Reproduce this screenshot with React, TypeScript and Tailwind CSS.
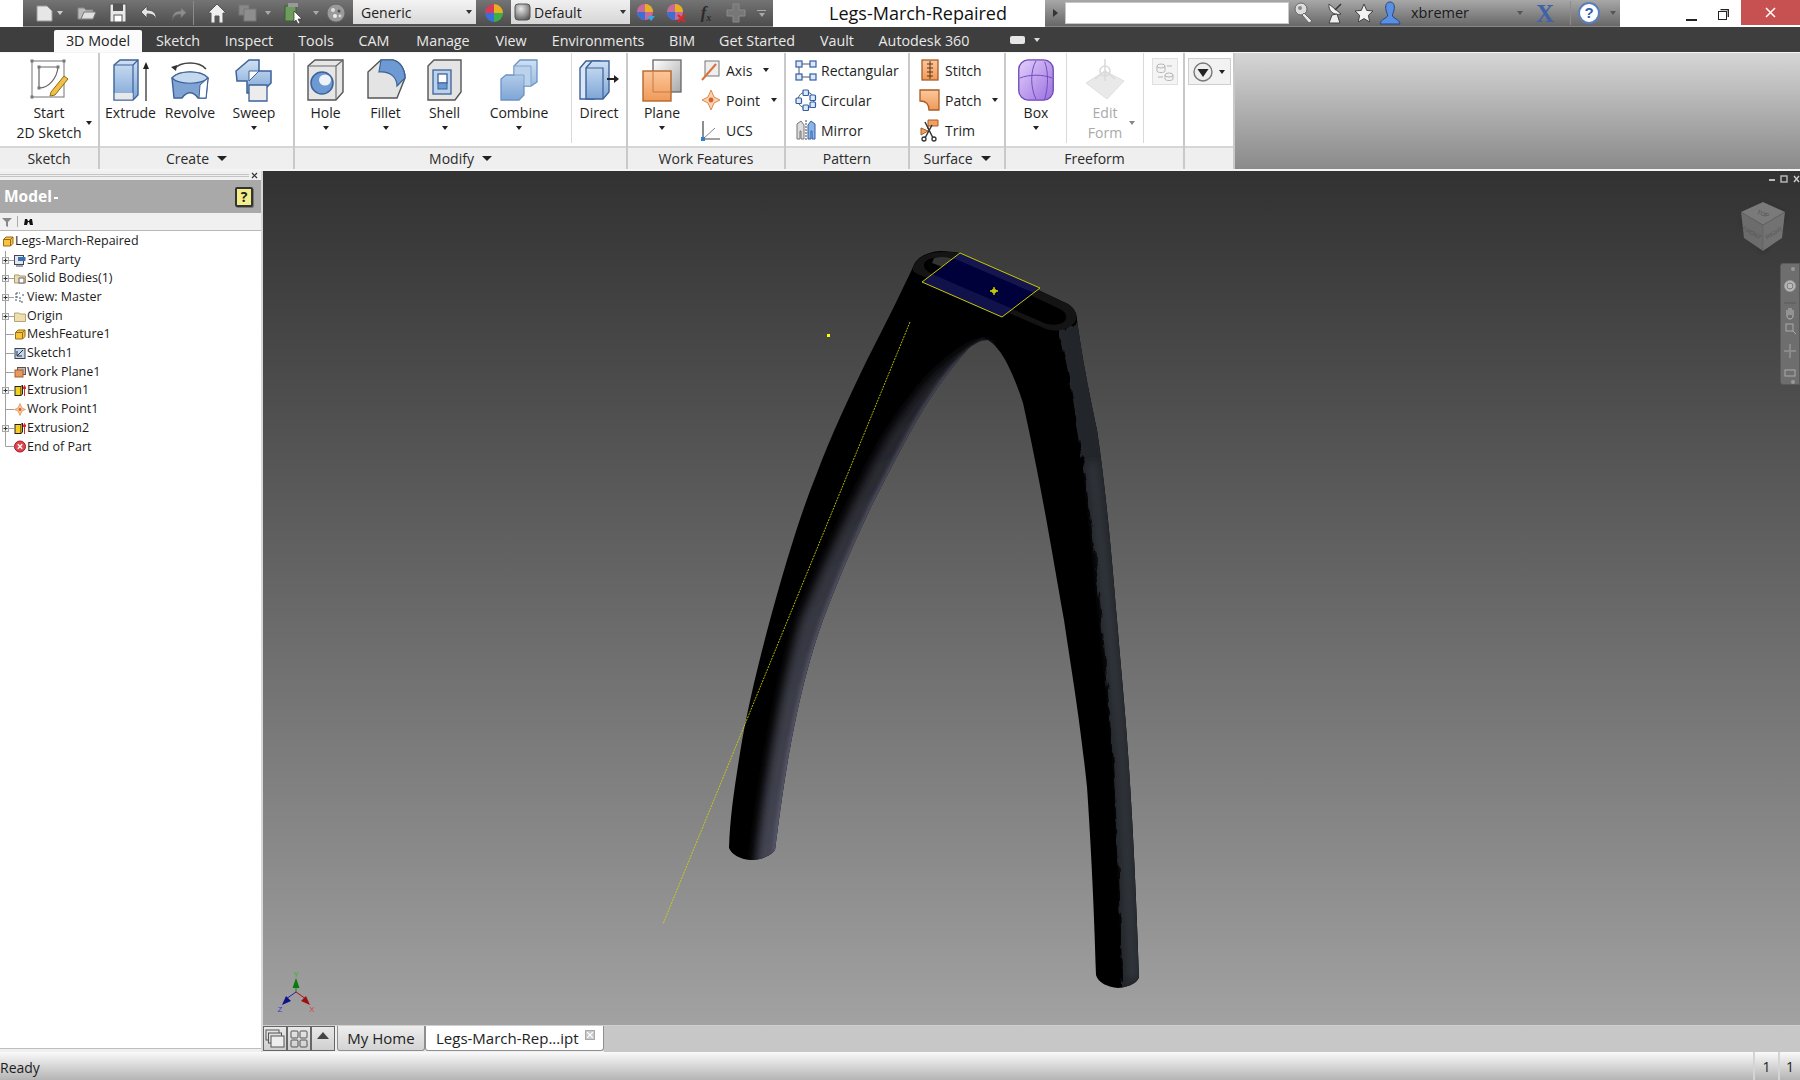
import React from 'react'

const UI = "font-['Open_Sans',sans-serif]"

function Caret({ className = 'border-t-[#222]', big }: { className?: string; big?: boolean }) {
  const size = big ? 'border-l-[5px] border-r-[5px] border-t-[5px]' : 'border-l-[3.5px] border-r-[3.5px] border-t-[4px]'
  return <span className={`inline-block w-0 h-0 border-l-transparent border-r-transparent ${size} ${className}`} />
}

function Slot({ className, children }: { className: string; children?: React.ReactNode }) {
  return <div className={`flex items-center justify-center shrink-0 h-full ${className}`}>{children}</div>
}

function Defs() {
  return (
    <svg className="absolute w-0 h-0">
      <defs>
        <linearGradient id="bl" x1="0" y1="0" x2="0" y2="1">
          <stop offset="0" stopColor="#cfe0f3" />
          <stop offset="1" stopColor="#7fa6d6" />
        </linearGradient>
        <linearGradient id="or" x1="0" y1="0" x2="0" y2="1">
          <stop offset="0" stopColor="#fbc79a" />
          <stop offset="1" stopColor="#f09a5a" />
        </linearGradient>
        <linearGradient id="pu" x1="0" y1="0" x2="1" y2="1">
          <stop offset="0" stopColor="#e3d0fb" />
          <stop offset="1" stopColor="#9a6fe0" />
        </linearGradient>
        <linearGradient id="gr" x1="0" y1="0" x2="1" y2="1">
          <stop offset="0" stopColor="#ffffff" />
          <stop offset="1" stopColor="#a8a8a8" />
        </linearGradient>
        <radialGradient id="sphere" cx=".4" cy=".3" r=".8">
          <stop offset="0" stopColor="#e8e8e8" />
          <stop offset="1" stopColor="#555" />
        </radialGradient>
      </defs>
    </svg>
  )
}

/* ---------- ribbon icons ---------- */
const S = '#3d6299'

const IconSketch = () => (
  <svg width="40" height="44" viewBox="0 0 40 44" fill="none">
    <rect x="3" y="3" width="32" height="36" stroke="#8a8a8a" strokeWidth="1.2" />
    <path d="M10 9 H29 M10 9 V30 M10 30 C20 30 28 20 29 9" stroke="#666" strokeWidth="1.2" />
    {[[3, 3], [35, 3], [3, 39], [10, 9], [29, 9], [10, 30]].map(([x, y], i) => (
      <rect key={i} x={x - 1.5} y={y - 1.5} width="3" height="3" fill="#777" />
    ))}
    <path d="M22 34 L35 18 L39 21 L26 37 L21 38 Z" fill="#f2c044" stroke="#8c6a1c" strokeWidth="1" />
  </svg>
)
const IconExtrude = () => (
  <svg width="44" height="46" viewBox="0 0 44 46" fill="none">
    <path d="M5 8 L11 3 H29 V38 L24 43 H5 Z" fill="url(#bl)" stroke={S} strokeWidth="1.4" />
    <path d="M5 8 H24 V43 M24 8 L29 3" stroke={S} strokeWidth="1.2" />
    <rect x="5.7" y="36" width="18" height="6.5" fill="#e8e8e8" />
    <path d="M37 44 V10" stroke="#333" strokeWidth="1.3" />
    <path d="M37 5 L40 12 H34 Z" fill="#222" />
  </svg>
)
const IconRevolve = () => (
  <svg width="42" height="44" viewBox="0 0 42 44" fill="none">
    <path d="M5 11 C12 3 30 3 37 11" stroke="#444" strokeWidth="1.6" />
    <path d="M2 9 L8 7 L7 13 Z" fill="#333" />
    <path d="M3 20 C10 12 32 12 39 20 L37 40 H29 C24 33 18 33 13 40 H5 Z" fill="#7fa4d4" stroke={S} strokeWidth="1.4" />
    <path d="M3 20 C10 27 32 27 39 20 C32 12 10 12 3 20 Z" fill="#c4d8ee" stroke={S} strokeWidth="1.2" />
    <path d="M31 27 L39 20 L37 40 H30 Z" fill="#fff" stroke={S} strokeWidth="1" />
  </svg>
)
const IconSweep = () => (
  <svg width="42" height="46" viewBox="0 0 42 46" fill="none">
    <path d="M3 14 L16 3 H26 V14 H38 V26 L28 36 H14 V24 H4 Z" fill="url(#bl)" stroke={S} strokeWidth="1.5" />
    <path d="M16 14 H26 L16 24 Z" fill="#fff" stroke={S} strokeWidth="1" />
    <path d="M16 28 H34 V44 H16 Z" fill="#ececec" stroke={S} strokeWidth="1.3" />
  </svg>
)
const IconHole = () => (
  <svg width="42" height="44" viewBox="0 0 42 44" fill="none">
    <path d="M3 8 L10 2 H38 V34 L31 42 H3 Z" fill="#e6e6e6" stroke="#555" strokeWidth="1.4" />
    <path d="M3 8 H31 V42 M31 8 L38 2" stroke="#666" strokeWidth="1.1" />
    <circle cx="17" cy="25" r="11" fill="#6d9ad3" stroke={S} strokeWidth="1.5" />
    <ellipse cx="20" cy="22" rx="6" ry="5.5" fill="#eef3fa" />
  </svg>
)
const IconFillet = () => (
  <svg width="42" height="44" viewBox="0 0 42 44" fill="none">
    <path d="M3 14 L16 2 H28 C36 4 40 12 40 20 L32 40 H3 Z" fill="#e4e4e4" stroke="#555" strokeWidth="1.4" />
    <path d="M16 2 H28 C36 4 40 12 40 20 L32 28 C32 20 26 13 14 14 Z" fill="#6d9ad3" stroke={S} strokeWidth="1.2" />
  </svg>
)
const IconShell = () => (
  <svg width="40" height="44" viewBox="0 0 40 44" fill="none">
    <path d="M3 8 L9 2 H36 V34 L30 42 H3 Z" fill="#e4e4e4" stroke="#555" strokeWidth="1.4" />
    <rect x="8" y="12" width="18" height="24" fill="#bcd2eb" stroke={S} strokeWidth="1.3" />
    <rect x="13" y="16" width="9" height="9" fill="#fff" stroke={S} strokeWidth="1.3" />
    <rect x="13" y="25" width="9" height="6" fill="#6d9ad3" stroke={S} strokeWidth="1" />
  </svg>
)
const IconCombine = () => (
  <svg width="40" height="44" viewBox="0 0 40 44" fill="none">
    <path d="M15 8 L21 2 H38 V24 L32 28 H25 V37 L20 42 H2 V21 L7 17 H15 Z" fill="url(#bl)" stroke="#6a92c6" strokeWidth="1.3" />
    <path d="M15 17 V8 H32 V28 H25 V17 Z" fill="#bcd2ea" stroke="#7fa4d0" strokeWidth="1" />
  </svg>
)
const IconDirect = () => (
  <svg width="42" height="44" viewBox="0 0 42 44" fill="none">
    <path d="M2 10 L8 3 H22 V34 L16 41 H2 Z" fill="#d9e6f5" stroke={S} strokeWidth="1.4" />
    <path d="M8 10 L14 3 H31 V34 L25 41 H8 Z" fill="url(#bl)" stroke={S} strokeWidth="1.4" />
    <path d="M8 10 H25 V41" stroke={S} strokeWidth="1.2" />
    <path d="M29 21 H38" stroke="#222" strokeWidth="2" />
    <path d="M36 17 L41 21 L36 25 Z" fill="#222" />
  </svg>
)
const IconPlane = () => (
  <svg width="42" height="44" viewBox="0 0 42 44" fill="none">
    <rect x="12" y="2" width="28" height="32" fill="url(#gr)" stroke="#666" strokeWidth="1.3" />
    <rect x="2" y="13" width="28" height="30" fill="url(#or)" stroke="#b5662b" strokeWidth="1.4" />
    <path d="M12 13 V34 H30" stroke="#c67a3e" strokeWidth="1" />
  </svg>
)
const IconBox = () => (
  <svg width="42" height="46" viewBox="0 0 42 48" fill="none">
    <rect x="3" y="3" width="36" height="42" rx="10" fill="url(#pu)" stroke="#6f4bb8" strokeWidth="1.4" />
    <path d="M4 22 C14 18 28 18 38 22 M21 4 C15 14 15 32 21 44 M30 5 C34 14 34 32 30 44" stroke="#6f4bb8" strokeWidth="1" />
  </svg>
)
const IconEditForm = () => (
  <svg width="44" height="46" viewBox="0 0 44 46" fill="none" opacity=".55">
    <path d="M3 26 L22 14 L41 24 L24 42 Z" fill="#d8d8d8" stroke="#c4c4c4" />
    <circle cx="22" cy="14" r="5" fill="none" stroke="#bdbdbd" strokeWidth="1.6" />
    <path d="M22 2 V24 M22 14 L12 22 M22 14 L32 22" stroke="#bdbdbd" strokeWidth="1.6" />
  </svg>
)

const IconAxis = () => (
  <svg width="20" height="22" viewBox="0 0 20 22" fill="none">
    <rect x="4" y="2" width="14" height="15" fill="#eee" stroke="#777" />
    <path d="M1 21 L15 5" stroke="#d8743a" strokeWidth="2" />
  </svg>
)
const IconPoint = () => (
  <svg width="20" height="22" viewBox="0 0 20 22" fill="none">
    <path d="M10 1 L13 8 L19 11 L13 14 L10 21 L7 14 L1 11 L7 8 Z" fill="#f6d3b0" stroke="#df8a4a" />
    <circle cx="10" cy="11" r="2.4" fill="#d8612b" />
  </svg>
)
const IconUCS = () => (
  <svg width="22" height="22" viewBox="0 0 22 22" fill="none">
    <path d="M3 2 V20 H20" stroke="#444" strokeWidth="1.2" />
    <path d="M3 20 L15 9" stroke="#888" />
    <rect x="1" y="18" width="4" height="4" fill="#2f7fd8" />
  </svg>
)
const IconRect = () => (
  <svg width="22" height="22" viewBox="0 0 22 22" fill="none">
    <path d="M4 5 H18 M4 5 V18 M4 18 H18" stroke="#555" />
    {[[1, 2], [15, 2], [1, 15], [15, 15]].map(([x, y], i) => (
      <rect key={i} x={x} y={y} width="6" height="6" fill="#dfe9f6" stroke="#2f5ea8" strokeWidth="1.2" />
    ))}
  </svg>
)
const IconCircular = () => (
  <svg width="22" height="22" viewBox="0 0 22 22" fill="none">
    <circle cx="11" cy="11" r="8" stroke="#666" />
    {[[8, 1], [15, 6], [15, 13], [8, 16], [1, 9]].map(([x, y], i) => (
      <rect key={i} x={x} y={y} width="5.5" height="5.5" rx="1" fill="#dfe9f6" stroke="#2f5ea8" strokeWidth="1.2" />
    ))}
  </svg>
)
const IconMirror = () => (
  <svg width="22" height="22" viewBox="0 0 22 22" fill="none">
    <path d="M2 20 V5 L6 2 L9 6 V20 H6 V12 H5 V20 Z" fill="#ddd" stroke="#777" />
    <path d="M20 20 V5 L16 2 L13 6 V20 H16 V12 H17 V20 Z" fill="#8db3e2" stroke="#2f5ea8" />
    <path d="M11 1 V21" stroke="#444" strokeDasharray="2 1" />
  </svg>
)
const IconStitch = () => (
  <svg width="20" height="22" viewBox="0 0 20 22" fill="none">
    <rect x="2" y="1" width="16" height="20" fill="url(#or)" stroke="#a85c28" strokeWidth="1.3" />
    <path d="M10 2 V20 M7 5 H13 M7 9 H13 M7 13 H13 M7 17 H13" stroke="#5a3414" />
  </svg>
)
const IconPatch = () => (
  <svg width="22" height="22" viewBox="0 0 22 22" fill="none">
    <path d="M1 1 H20 V21 H10 C10 15 7 12 1 12 Z" fill="url(#or)" stroke="#a85c28" strokeWidth="1.3" />
  </svg>
)
const IconTrim = () => (
  <svg width="22" height="24" viewBox="0 0 22 24" fill="none">
    <path d="M9 2 V11 M9 2 H19 V8 H9" fill="#f0a060" stroke="#a85c28" />
    <path d="M2 10 L9 13 L2 17 Z" fill="#f0a060" stroke="#a85c28" />
    <path d="M6 4 L14 20 M13 7 L6 20" stroke="#333" strokeWidth="1.5" />
    <circle cx="15" cy="21" r="2" stroke="#333" strokeWidth="1.3" />
    <circle cx="5" cy="21" r="2" stroke="#333" strokeWidth="1.3" />
  </svg>
)

function Large({ className, icon, lines, caret, muted }: { className: string; icon: React.ReactNode; lines: string[]; caret?: boolean; muted?: boolean }) {
  return (
    <div className={`flex flex-col items-center shrink-0 h-full pt-[5px] text-[14px] leading-[20px] ${muted ? 'text-[#a9a9a9]' : 'text-[#1e1e1e]'} ${className}`}>
      <div className="h-[44px] flex items-center justify-center">{icon}</div>
      <div className="mt-[1px] text-center whitespace-nowrap">
        {lines.map((l) => (
          <div key={l}>{l}</div>
        ))}
      </div>
      {caret && (
        <div className="h-[10px] flex items-center">
          <Caret />
        </div>
      )}
    </div>
  )
}

function SmallRow({ icon, label, caret, className }: { icon: React.ReactNode; label: string; caret?: boolean; className?: string }) {
  return (
    <div className={`h-[30px] flex items-center text-[14px] text-[#1e1e1e] whitespace-nowrap ${className ?? ''}`}>
      <div className="w-[24px] flex justify-center shrink-0">{icon}</div>
      <span className="ml-[3px]">{label}</span>
      {caret && (
        <span className="ml-[11px] flex items-center">
          <Caret />
        </span>
      )}
    </div>
  )
}

function Panel({ className, label, caret, children }: { className: string; label?: string; caret?: boolean; children: React.ReactNode }) {
  return (
    <div className={`flex flex-col shrink-0 border-r-2 border-[#c9c9c9] ${className}`}>
      <div className="h-[93px] flex">{children}</div>
      <div className="h-[23px] bg-[#efefef] border-t-2 border-[#d6d6d6] flex items-center justify-center gap-[8px] text-[14px] text-[#2a2a2a]">
        {label}
        {caret && <Caret big />}
      </div>
    </div>
  )
}

const VLine = () => <div className="w-[1px] h-[90px] bg-[#d9d9d9] shrink-0" />

/* ---------- quick access toolbar ---------- */
function TitleBar() {
  return (
    <div className="h-[27px] flex shrink-0 bg-white">
      <div className="w-[23px] shrink-0 bg-white" />
      <div className="w-[750px] shrink-0 flex bg-gradient-to-b from-[#747474] to-[#4d4d4d] border-b border-[#888]">
        <Slot className="w-[11px]" />
        <Slot className="w-[20px]">
          <svg width="17" height="18" viewBox="0 0 17 18"><path d="M1 2 H11 L16 7 V17 H1 Z" fill="#e6e6e6" stroke="#999" /></svg>
        </Slot>
        <Slot className="w-[12px]"><Caret className="border-t-[#ccc]" /></Slot>
        <Slot className="w-[42px]">
          <svg width="20" height="16" viewBox="0 0 20 16"><path d="M1 3 H7 L9 5 H16 V14 H1 Z" fill="#bbb" stroke="#888" /><path d="M4 14 L7 7 H19 L16 14 Z" fill="#e0e0e0" stroke="#777" /></svg>
        </Slot>
        <Slot className="w-[20px]">
          <svg width="18" height="20" viewBox="0 0 18 20"><rect x="1" y="1" width="16" height="18" rx="1" fill="#e8e8e8" stroke="#555" /><rect x="4" y="1" width="10" height="7" fill="#555" /><rect x="5" y="12" width="8" height="7" fill="#fff" stroke="#555" /></svg>
        </Slot>
        <Slot className="w-[42px]">
          <svg width="20" height="16" viewBox="0 0 20 16" fill="none"><path d="M8 1 L2 7 L8 13 V9 C13 9 16 10 17 15 C18 8 14 5 8 5 Z" fill="#e4e4e4" stroke="#555" /></svg>
        </Slot>
        <Slot className="w-[18px]">
          <svg width="18" height="15" viewBox="0 0 20 16" fill="none"><path d="M12 1 L18 7 L12 13 V9 C7 9 4 10 3 15 C2 8 6 5 12 5 Z" fill="#8d8d8d" stroke="#666" /></svg>
        </Slot>
        <Slot className="w-[10px]"><div className="w-[1px] h-[24px] bg-[#8a8a8a]" /></Slot>
        <Slot className="w-[38px]">
          <svg width="20" height="21" viewBox="0 0 20 21"><path d="M10 1 L19 10 H16 V20 H12 V13 H8 V20 H4 V10 H1 Z" fill="#efefef" stroke="#555" /></svg>
        </Slot>
        <Slot className="w-[24px]">
          <svg width="20" height="18" viewBox="0 0 20 18"><rect x="1" y="1" width="10" height="10" fill="#888" stroke="#777" /><rect x="6" y="5" width="12" height="12" fill="#8e8e8e" stroke="#777" /></svg>
        </Slot>
        <Slot className="w-[15px]"><Caret className="border-t-[#aaa]" /></Slot>
        <Slot className="w-[36px]">
          <svg width="20" height="22" viewBox="0 0 20 22"><rect x="2" y="4" width="11" height="15" fill="#6e9c5c" stroke="#3d5f33" /><path d="M5 1 H15 V5 H5 Z" fill="#999" /><path d="M11 9 L19 17 H15 L17 21 L15 22 L13 18 L11 20 Z" fill="#fff" stroke="#333" strokeWidth=".7" /></svg>
        </Slot>
        <Slot className="w-[10px]"><Caret className="border-t-[#aaa]" /></Slot>
        <Slot className="w-[30px]">
          <svg width="20" height="20" viewBox="0 0 20 20"><circle cx="10" cy="10" r="9" fill="#9a9a9a" stroke="#666" /><circle cx="7" cy="7" r="2" fill="#ddd" /><circle cx="13" cy="8" r="1.5" fill="#555" /><circle cx="9" cy="13" r="2" fill="#eee" /><circle cx="14" cy="13" r="1.4" fill="#ddd" /></svg>
        </Slot>
        <Slot className="w-[2px]" />
        <div className="w-[123px] shrink-0 h-[24px] bg-gradient-to-b from-[#f4f4f4] to-[#d9d9d9] flex items-center justify-between pl-[8px] pr-[4px] text-[14px] text-[#222]">
          Generic
          <Caret className="border-t-[#333]" />
        </div>
        <Slot className="w-[35px]">
          <svg width="20" height="20" viewBox="0 0 20 20"><path d="M10 10 L10 1 A9 9 0 0 1 19 10 Z" fill="#e8b020" /><path d="M10 10 L19 10 A9 9 0 0 1 10 19 Z" fill="#3ab04a" /><path d="M10 10 L10 19 A9 9 0 0 1 1 10 Z" fill="#3a6fd8" /><path d="M10 10 L1 10 A9 9 0 0 1 10 1 Z" fill="#d83a5a" /></svg>
        </Slot>
        <div className="w-[119px] shrink-0 h-[24px] bg-gradient-to-b from-[#f0f0f0] to-[#d6d6d6] flex items-center justify-between pl-[3px] pr-[4px] text-[14px] text-[#222]">
          <span className="flex items-center gap-[3px]">
            <svg width="17" height="18" viewBox="0 0 17 18"><rect x="1" y="1" width="15" height="16" rx="3" fill="url(#sphere)" stroke="#555" /></svg>
            Default
          </span>
          <Caret className="border-t-[#333]" />
        </div>
        <Slot className="w-[32px]">
          <svg width="20" height="20" viewBox="0 0 20 20"><circle cx="9" cy="9" r="8" fill="#c76a9a" /><path d="M9 9 L9 1 A8 8 0 0 1 17 9 Z" fill="#e8b020" /><path d="M9 9 L1 9 A8 8 0 0 0 9 17 Z" fill="#3a6fd8" /><path d="M11 13 H19 L15 18 Z" fill="#39a8e0" /></svg>
        </Slot>
        <Slot className="w-[28px]">
          <svg width="20" height="20" viewBox="0 0 20 20"><circle cx="9" cy="9" r="8" fill="#c76a9a" /><path d="M9 9 L9 1 A8 8 0 0 1 17 9 Z" fill="#e8b020" /><path d="M9 9 L1 9 A8 8 0 0 0 9 17 Z" fill="#3a6fd8" /><path d="M12 12 L19 19 M19 12 L12 19" stroke="#d82a2a" strokeWidth="2" /></svg>
        </Slot>
        <Slot className="w-[32px]">
          <span className="font-['Liberation_Serif',serif] italic font-bold text-[17px] text-[#2b2b2b]">f<sub className="text-[10px]">x</sub></span>
        </Slot>
        <Slot className="w-[28px]">
          <svg width="20" height="20" viewBox="0 0 20 20"><path d="M7 1 H13 V7 H19 V13 H13 V19 H7 V13 H1 V7 H7 Z" fill="#777" stroke="#8a8a8a" /></svg>
        </Slot>
        <Slot className="w-[23px]">
          <div className="flex flex-col items-center gap-[2px]">
            <div className="w-[9px] h-[1px] bg-[#aaa]" />
            <Caret className="border-t-[#aaa]" />
          </div>
        </Slot>
      </div>
      <div className="w-[272px] shrink-0 bg-white flex items-center justify-center pl-[18px] text-[18px] text-[#111]">
        Legs-March-Repaired
      </div>
      <div className="w-[575px] shrink-0 flex bg-gradient-to-b from-[#a8a8a8] to-[#686868] border-b border-[#888]">
        <Slot className="w-[20px]">
          <span className="w-0 h-0 border-t-[4px] border-b-[4px] border-l-[5px] border-t-transparent border-b-transparent border-l-[#333]" />
        </Slot>
        <Slot className="w-[224px]">
          <div className="w-full h-[22px] bg-white border border-[#c8c8c8]" />
        </Slot>
        <Slot className="w-[30px]">
          <svg width="20" height="22" viewBox="0 0 20 22"><circle cx="7" cy="7" r="6" fill="#ddd" stroke="#666" /><circle cx="6" cy="6" r="2" fill="#888" /><path d="M10 11 L18 19 L15 21 L8 13 Z" fill="#e8e8e8" stroke="#666" /></svg>
        </Slot>
        <Slot className="w-[32px]">
          <svg width="20" height="24" viewBox="0 0 20 24"><path d="M4 3 C3 10 9 15 16 13 Z" fill="#f2f2f2" stroke="#444" /><path d="M10 9 L16 3" stroke="#333" strokeWidth="1.4" /><path d="M7 14 L4 22 H15 L12 13 Z" fill="#efefef" stroke="#444" /></svg>
        </Slot>
        <Slot className="w-[26px]">
          <svg width="20" height="20" viewBox="0 0 20 20"><path d="M10 1 L12.7 7.4 L19 8 L14.4 12.3 L15.7 19 L10 15.6 L4.3 19 L5.6 12.3 L1 8 L7.3 7.4 Z" fill="#f2f2f2" stroke="#444" /></svg>
        </Slot>
        <Slot className="w-[26px]">
          <svg width="22" height="24" viewBox="0 0 22 24"><path d="M11 1 C15 1 16 5 15 9 C14.5 12 13 13 13.5 15 C14 17 20 18 21 23 H1 C2 18 8 17 8.5 15 C9 13 7.5 12 7 9 C6 5 7 1 11 1 Z" fill="#5b8fe0" stroke="#23478a" /></svg>
        </Slot>
        <Slot className="w-[8px]" />
        <div className="w-[100px] shrink-0 flex items-center text-[14.5px] text-[#1a1a1a]">xbremer</div>
        <Slot className="w-[18px]"><Caret className="border-t-[#555]" /></Slot>
        <Slot className="w-[32px]">
          <span className="font-['Liberation_Serif',serif] font-bold text-[25px] leading-none text-[#3f62a8]">X</span>
        </Slot>
        <Slot className="w-[8px]" />
        <Slot className="w-[3px]"><div className="w-[1px] h-[24px] bg-[#8c8c8c]" /></Slot>
        <Slot className="w-[34px]">
          <div className="w-[22px] h-[22px] rounded-full bg-white border-2 border-[#5a7fb8] flex items-center justify-center font-['Liberation_Sans',sans-serif] font-bold text-[15px] text-[#2c62b8]">?</div>
        </Slot>
        <Slot className="w-[14px]"><Caret className="border-t-[#555]" /></Slot>
      </div>
      <div className="flex-1 bg-white flex">
        <Slot className="w-[121px] pl-[54px] pt-[6px]">
          <div className="flex items-center gap-[21px]">
            <div className="w-[11px] h-[2.5px] bg-[#222] mt-[7px]" />
            <svg width="11" height="11" viewBox="0 0 11 11" fill="none" className="-mt-[5px]"><rect x=".5" y="2.5" width="8" height="8" stroke="#222" /><path d="M2.5 .7 H10.3 V8" stroke="#222" strokeWidth="1.3" /></svg>
          </div>
        </Slot>
        <div className="flex-1 h-[25px] bg-[#c75050] flex items-center justify-center">
          <svg width="11" height="11" viewBox="0 0 11 11"><path d="M1 1 L10 10 M10 1 L1 10" stroke="#fff" strokeWidth="1.5" /></svg>
        </div>
      </div>
    </div>
  )
}

/* ---------- ribbon ---------- */
function Tabs() {
  const tabs = [
    ['3D Model', 'w-[88px] ml-[54px]'],
    ['Sketch', 'w-[72px]'],
    ['Inspect', 'w-[70px]'],
    ['Tools', 'w-[64px]'],
    ['CAM', 'w-[52px]'],
    ['Manage', 'w-[86px]'],
    ['View', 'w-[50px]'],
    ['Environments', 'w-[124px]'],
    ['BIM', 'w-[44px]'],
    ['Get Started', 'w-[106px]'],
    ['Vault', 'w-[54px]'],
    ['Autodesk 360', 'w-[120px]'],
  ]
  return (
    <div className="h-[25px] flex shrink-0 bg-[#3e3e3e] pt-[3px] pb-0">
      {tabs.map(([t, w], i) => (
        <div key={t} className={`flex items-center justify-center text-[14.3px] shrink-0 ${w} ${i === 0 ? 'bg-[#fbfbfb] text-[#222] rounded-t-[2px]' : 'text-[#e9e9e9]'}`}>
          {t}
        </div>
      ))}
      <div className="flex items-center gap-[9px] ml-[26px] pb-[3px]">
        <div className="w-[15px] h-[8px] bg-[#e6e6e6] rounded-[2px]" />
        <Caret className="border-t-[#ddd]" />
      </div>
    </div>
  )
}

function Ribbon() {
  return (
    <div className="h-[117px] flex shrink-0 border-t border-[#f4f4f4] bg-gradient-to-b from-[#d6d6d6] to-[#8a8a8a]">
      <Panel className="w-[100px] bg-white" label="Sketch">
        <div className="relative w-[98px]">
          <Large className="w-[98px]" icon={<IconSketch />} lines={['Start', '2D Sketch']} />
          <div className="absolute right-[6px] top-[68px] flex"><Caret /></div>
        </div>
      </Panel>
      <Panel className="w-[195px] bg-white" label="Create" caret>
        <Large className="w-[61px]" icon={<IconExtrude />} lines={['Extrude']} />
        <Large className="w-[58px]" icon={<IconRevolve />} lines={['Revolve']} />
        <Large className="w-[70px]" icon={<IconSweep />} lines={['Sweep']} caret />
      </Panel>
      <Panel className="w-[333px] bg-white" label="Modify" caret>
        <Large className="w-[61px]" icon={<IconHole />} lines={['Hole']} caret />
        <Large className="w-[59px]" icon={<IconFillet />} lines={['Fillet']} caret />
        <Large className="w-[59px]" icon={<IconShell />} lines={['Shell']} caret />
        <Large className="w-[90px]" icon={<IconCombine />} lines={['Combine']} caret />
        <div className="w-[7px] shrink-0" />
        <VLine />
        <Large className="w-[54px]" icon={<IconDirect />} lines={['Direct']} />
      </Panel>
      <Panel className="w-[158px] bg-white" label="Work Features">
        <Large className="w-[68px]" icon={<IconPlane />} lines={['Plane']} caret />
        <div className="flex flex-col pt-[2px] ml-[3px]">
          <SmallRow icon={<IconAxis />} label="Axis" caret />
          <SmallRow icon={<IconPoint />} label="Point" caret />
          <SmallRow icon={<IconUCS />} label="UCS" />
        </div>
      </Panel>
      <Panel className="w-[124px] bg-white" label="Pattern">
        <div className="flex flex-col pt-[2px] pl-[8px]">
          <SmallRow icon={<IconRect />} label="Rectangular" />
          <SmallRow icon={<IconCircular />} label="Circular" />
          <SmallRow icon={<IconMirror />} label="Mirror" />
        </div>
      </Panel>
      <Panel className="w-[96px] bg-white" label="Surface" caret>
        <div className="flex flex-col pt-[2px] pl-[8px]">
          <SmallRow icon={<IconStitch />} label="Stitch" />
          <SmallRow icon={<IconPatch />} label="Patch" caret />
          <SmallRow icon={<IconTrim />} label="Trim" />
        </div>
      </Panel>
      <Panel className="w-[179px] bg-white" label="Freeform">
        <Large className="w-[60px]" icon={<IconBox />} lines={['Box']} caret />
        <VLine />
        <div className="relative w-[76px]">
          <Large className="w-[76px]" muted icon={<IconEditForm />} lines={['Edit', 'Form']} />
          <div className="absolute right-[8px] top-[68px] flex"><Caret className="border-t-[#888]" /></div>
        </div>
        <VLine />
        <div className="flex-1 flex justify-center pt-[5px] pl-[3px]">
          <div className="w-[26px] h-[27px] bg-[#f4f4f4] border border-[#e0e0e0] flex items-center justify-center">
            <svg width="18" height="20" viewBox="0 0 18 20" fill="none" stroke="#b5b5b5"><ellipse cx="5" cy="4" rx="4" ry="2" /><path d="M1 4 V9 C1 11 9 11 9 9 V4" /><ellipse cx="13" cy="13" rx="4" ry="2" /><path d="M9 13 V17 C9 19 17 19 17 17 V13" /><path d="M11 4 H16 M2 15 H7" /></svg>
          </div>
        </div>
      </Panel>
      <Panel className="w-[50px] bg-white">
        <div className="flex-1 flex justify-center pt-[5px]">
          <div className="w-[43px] h-[27px] bg-[#f2f2f2] border border-[#cfcfcf] flex items-center justify-center gap-[6px]">
            <svg width="20" height="20" viewBox="0 0 20 20"><circle cx="10" cy="10" r="9" fill="#eee" stroke="#777" strokeWidth="1.4" /><path d="M4.5 7 H15.5 L10 15 Z" fill="#222" /></svg>
            <Caret />
          </div>
        </div>
      </Panel>
    </div>
  )
}

/* ---------- model browser ---------- */
function TreeConnector({ plus, last }: { plus?: boolean; last?: boolean }) {
  return (
    <svg width="14" height="19" viewBox="0 0 14 19" className="shrink-0">
      <path d={last ? 'M5.5 0 V9.5 H14' : 'M5.5 0 V19 M5.5 9.5 H14'} stroke="#a0a0a0" fill="none" />
      {plus && (
        <>
          <rect x="2.5" y="6.5" width="6" height="6" fill="#f4f4f4" stroke="#a8a8a8" />
          <path d="M3.5 9.5 H7.5 M5.5 7.5 V11.5" stroke="#333" />
        </>
      )}
    </svg>
  )
}

function TreeIcon({ kind }: { kind: string }) {
  const box = (
    <>
      <path d="M1.5 4.5 L4 2 H11 V8.5 L8.5 11 H1.5 Z" fill="#f5c542" stroke="#9a6a14" />
      <path d="M1.5 4.5 H8.5 V11 M8.5 4.5 L11 2" stroke="#9a6a14" fill="none" />
    </>
  )
  return (
    <svg width="12" height="13" viewBox="0 0 12 13" className="shrink-0">
      {kind === 'mesh' && box}
      {kind === 'party' && (
        <>
          <rect x=".5" y="1.5" width="9" height="9" fill="#dfe7f2" stroke="#445" />
          <rect x="4" y="3" width="7.5" height="4" fill="#3a6fb0" />
          <path d="M2 12 H9" stroke="#445" />
        </>
      )}
      {kind === 'solid' && (
        <>
          <path d="M.5 3 H5 L6 4 H11.5 V11 H.5 Z" fill="#ecdcb0" stroke="#a89a70" />
          <rect x="5" y="6" width="5" height="5" fill="#fff" stroke="#667" />
        </>
      )}
      {kind === 'view' && <path d="M2 2 H6 M2 2 V10 M2 6 H5 M6 6 V11 H10 M8 4 H11" stroke="#456" fill="none" strokeDasharray="2 1" />}
      {kind === 'folder' && <path d="M.5 3 H5 L6 4 H11.5 V11.5 H.5 Z" fill="#f0dfae" stroke="#b5a678" />}
      {kind === 'sketch' && (
        <>
          <rect x="1" y="1.5" width="10" height="10" fill="#c9d6e8" stroke="#345" />
          <path d="M3 9 L9 3 M3 4 V9 H8" stroke="#234" fill="none" />
        </>
      )}
      {kind === 'plane' && (
        <>
          <rect x="3.5" y="1.5" width="8" height="7" fill="#bbb" stroke="#555" />
          <rect x="1" y="4" width="8" height="7" fill="#e79a5e" stroke="#a85c28" />
        </>
      )}
      {kind === 'extrude' && (
        <>
          <rect x="1" y="2.5" width="6" height="9" fill="#f3cf1e" stroke="#222" />
          <path d="M7 2.5 L8.5 1 V10 L7 11.5" fill="#c9a516" stroke="#222" />
          <path d="M10.5 12 V3 M9.2 4.5 L10.5 1.5 L11.8 4.5 Z" stroke="#d22" fill="#d22" />
        </>
      )}
      {kind === 'point' && (
        <>
          <path d="M6 .5 L8 5 L11.5 6.5 L8 8 L6 12.5 L4 8 L.5 6.5 L4 5 Z" fill="#f4c9a0" stroke="#e0894a" strokeWidth=".7" />
          <circle cx="6" cy="6.5" r="1.4" fill="#d8612b" />
        </>
      )}
      {kind === 'end' && (
        <>
          <circle cx="6" cy="6.5" r="5.5" fill="#e2454f" stroke="#a01c24" />
          <path d="M3.8 4.3 L8.2 8.7 M8.2 4.3 L3.8 8.7" stroke="#fff" strokeWidth="1.4" />
        </>
      )}
    </svg>
  )
}

const treeRows = [
  { label: '3rd Party', kind: 'party', plus: true },
  { label: 'Solid Bodies(1)', kind: 'solid', plus: true },
  { label: 'View: Master', kind: 'view', plus: true },
  { label: 'Origin', kind: 'folder', plus: true },
  { label: 'MeshFeature1', kind: 'mesh' },
  { label: 'Sketch1', kind: 'sketch' },
  { label: 'Work Plane1', kind: 'plane' },
  { label: 'Extrusion1', kind: 'extrude', plus: true },
  { label: 'Work Point1', kind: 'point' },
  { label: 'Extrusion2', kind: 'extrude', plus: true },
  { label: 'End of Part', kind: 'end', last: true },
]

function Browser() {
  return (
    <div className="w-[263px] shrink-0 flex flex-col bg-[#f0f0f0] border-r-2 border-[#d8d8d8]">
      <div className="h-[9px] flex items-center justify-between pr-[3px]">
        <div className="flex-1 h-[3px] border-y border-[#c4c4c4] mr-[2px]" />
        <svg width="7" height="7" viewBox="0 0 7 7"><path d="M1 1 L6 6 M6 1 L1 6" stroke="#333" strokeWidth="1.2" /></svg>
      </div>
      <div className="h-[33px] bg-[#a9a9a9] flex items-center justify-between pl-[4px] pr-[8px]">
        <div className="flex items-center gap-[2px] text-white font-bold text-[15.5px]">
          Model
          <span className="w-[4px] h-[2px] bg-white mt-[2px]" />
        </div>
        <div className="w-[18px] h-[20px] bg-[#f3ee8a] border-2 border-[#333] rounded-[2px] shadow-[1px_1px_0_#777] flex items-center justify-center font-bold text-[14px] leading-none text-[#222]">?</div>
      </div>
      <div className="h-[17px] flex items-center pl-[2px] gap-[5px]">
        <svg width="10" height="10" viewBox="0 0 10 10"><path d="M0 1 H10 L6 5 V10 L4 9 V5 Z" fill="#888" /></svg>
        <div className="w-[1px] h-[11px] bg-[#aaa]" />
        <svg width="11" height="9" viewBox="0 0 11 9"><path d="M1 8 L2 2 H4 L5 4 H6 L7 2 H9 L10 8 H7 L6 5 H5 L4 8 Z" fill="#111" /></svg>
      </div>
      <div className="flex-1 bg-white border-t border-[#b8b8b8] pt-[1px] text-[12.5px] text-[#1c1c1c]">
        <div className="h-[18.7px] flex items-center pl-[2px] gap-[1px]">
          <TreeIcon kind="mesh" />
          Legs-March-Repaired
        </div>
        {treeRows.map((r) => (
          <div key={r.label} className="h-[18.7px] flex items-center whitespace-nowrap">
            <TreeConnector plus={r.plus} last={r.last} />
            <TreeIcon kind={r.kind} />
            <span className="ml-[1px]">{r.label}</span>
          </div>
        ))}
      </div>
      <div className="h-[4px] border-t border-[#bdbdbd]" />
    </div>
  )
}

/* ---------- 3D viewport drawing ---------- */
const LEGS =
  'M913 267 C916 258 926 252 940 251 C948 251 955 252 960 253 L1068 304 C1074 308 1077 313 1077 320 C1084 370 1091 400 1097 430 C1106 490 1112 560 1117 620 C1122 680 1126 720 1128 753 C1134 840 1137 920 1139 977 C1138 982 1130 987 1118 988 C1108 987 1098 983 1096 975 C1094 900 1090 830 1087 787 C1080 720 1073 680 1064 620 C1050 540 1040 480 1023 403 C1014 375 1002 348 988 340 C980 340 972 345 967 350 C950 370 935 390 923 410 C905 440 890 470 873 503 C855 540 838 580 823 620 C812 650 803 685 797 713 C788 755 783 790 778 827 L775 850 C770 856 762 860 750 860 C740 859 732 855 729 848 C730 815 735 785 740 753 C747 710 758 665 770 620 C785 565 800 515 817 473 C830 438 850 395 867 360 C880 335 900 295 913 267 Z'

function Viewport() {
  return (
    <div className="relative flex-1 bg-gradient-to-b from-[#323232] to-[#a2a2a2] overflow-hidden">
      <svg viewBox="263 171 1537 854" className="w-full h-full block">
        <defs>
          <clipPath id="legsClip"><path d={LEGS} /></clipPath>
          <filter id="soft" x="-40%" y="-10%" width="180%" height="120%"><feGaussianBlur stdDeviation="5" /></filter>
          <filter id="softer" x="-40%" y="-10%" width="180%" height="120%"><feGaussianBlur stdDeviation="2" /></filter>
          <filter id="rough" x="-20%" y="-5%" width="140%" height="110%">
            <feTurbulence type="fractalNoise" baseFrequency="0.25 0.06" numOctaves="2" seed="4" />
            <feDisplacementMap in="SourceGraphic" scale="9" />
          </filter>
          <linearGradient id="leftShade" x1="0" y1="0" x2="0" y2="1">
            <stop offset="0" stopColor="#1c1c22" />
            <stop offset=".45" stopColor="#34353f" />
            <stop offset="1" stopColor="#454654" />
          </linearGradient>
          <filter id="cubeShadow" x="-30%" y="-30%" width="160%" height="160%"><feGaussianBlur stdDeviation="3" /></filter>
        </defs>

        {/* model */}
        <path d={LEGS} fill="#000" />
        <g clipPath="url(#legsClip)">
          <path d="M985 341 C960 345 925 375 885 440 C860 485 825 560 800 620 C785 670 765 770 755 866 L800 866 L845 620 L945 410 L995 345 Z" fill="url(#leftShade)" filter="url(#soft)" />
          <path d="M985 342 C965 350 945 375 923 410 C905 440 890 470 873 503 C855 540 838 580 823 620 C812 650 803 685 797 713 C788 755 783 790 778 827 L775 855" fill="none" stroke="#64657a" strokeWidth="3" filter="url(#softer)" />
          <path d="M1058 330 L1100 318 L1165 990 L1122 992 C1122 900 1114 753 1102 620 C1096 560 1090 510 1083 463 C1076 420 1070 370 1058 330 Z" fill="#24252c" filter="url(#rough)" />
          <path d="M1090 463 L1106 620 L1120 760 L1130 980 L1136 980 L1125 760 L1112 620 L1095 463 Z" fill="#3e3f4a" filter="url(#soft)" />
        </g>

        {/* rim and slot */}
        <path d="M913 268 C916 258 928 252 942 252 C950 252 956 252 961 254 L1068 304 C1076 309 1078 317 1075 322 C1068 331 1056 332 1046 329 L925 277 C917 274 912 272 913 268 Z" fill="#141414" />
        <path d="M925 262 C930 256 945 256 955 260 L1060 309 C1068 313 1068 320 1062 323 C1056 326 1048 325 1042 322 L932 274 C925 270 922 266 925 262 Z" fill="#000" />
        <path d="M934 258 C941 256 949 257 955 260 L945 268 L932 263 Z" fill="#333" />

        {/* selected work plane */}
        <polygon points="960,253 1040,288 1002,317 922,282" fill="#00003a" />
        <polygon points="960,253 1040,288 1034,293 953,258" fill="#16164e" />
        <polygon points="922,282 1002,317 1013,309 932,274" fill="#12124a" />
        <polygon points="960,253 1040,288 1002,317 922,282" fill="none" stroke="#c9c900" strokeWidth="1" />
        <path d="M994 287 V295 M990 291 H998" stroke="#d8d800" strokeWidth="1.3" />
        <circle cx="994" cy="291" r="2" fill="none" stroke="#d8d800" />

        {/* work axis and point */}
        <path d="M910 322 L663 924" stroke="#d4d400" strokeWidth="1" strokeDasharray="2 1" opacity=".85" />
        <rect x="827" y="334" width="3" height="3" fill="#ffff00" />

        {/* triad */}
        <g strokeWidth="1" fill="none">
          <path d="M296 992 V980" stroke="#0a8a0a" />
          <path d="M296 992 L286 999" stroke="#2020b0" />
          <path d="M296 992 L306 999" stroke="#b01010" />
        </g>
        <path d="M296 978 L299.5 988 H292.5 Z" fill="#0a7a0a" />
        <path d="M282 1005 L291 1001 L286 996 Z" fill="#10108a" />
        <path d="M310 1005 L301 1001 L306 996 Z" fill="#a00f0f" />
        <text x="296" y="977" fontSize="8" fill="#18c018" textAnchor="middle" fontFamily="Liberation Sans, sans-serif">Y</text>
        <text x="280" y="1012" fontSize="8" fill="#3a3ad8" textAnchor="middle" fontFamily="Liberation Sans, sans-serif">Z</text>
        <text x="312" y="1012" fontSize="8" fill="#e03a3a" textAnchor="middle" fontFamily="Liberation Sans, sans-serif">X</text>

        {/* view cube */}
        <polygon points="1763,253 1742,222 1763,205 1785,215" fill="#000" opacity=".3" filter="url(#cubeShadow)" />
        <polygon points="1741,212 1763,202 1785,212 1763,225" fill="#7a7a7a" />
        <polygon points="1741,212 1763,225 1763,251 1744,238" fill="#6c6c6c" />
        <polygon points="1785,212 1763,225 1763,251 1782,238" fill="#727272" />
        <path d="M1763 225 L1741 212 M1763 225 L1785 212 M1763 225 V251" stroke="#5f5f5f" strokeWidth=".6" />
        <text x="1763" y="216" fontSize="6" fill="#4f4f4f" textAnchor="middle" fontFamily="Liberation Sans, sans-serif" transform="rotate(20 1763 214)">TOP</text>
        <text x="1752" y="235" fontSize="6" fill="#555" textAnchor="middle" fontFamily="Liberation Sans, sans-serif" transform="rotate(30 1752 233)">FRONT</text>
        <text x="1774" y="235" fontSize="6" fill="#555" textAnchor="middle" fontFamily="Liberation Sans, sans-serif" transform="rotate(-30 1774 233)">RIGHT</text>

        {/* document window buttons */}
        <path d="M1769 180 H1775" stroke="#bbb" strokeWidth="2" />
        <rect x="1781" y="176" width="6" height="6" fill="none" stroke="#bbb" strokeWidth="1.4" />
        <path d="M1794 176 L1799 182 M1799 176 L1794 182" stroke="#ccc" strokeWidth="1.4" />
      </svg>

      {/* navigation bar */}
      <div className="absolute right-0 top-[92px] w-[20px] h-[122px] bg-[#6e6e6e] rounded-l-[3px] border border-[#5a5a5a] flex flex-col items-center pt-[2px]">
        <svg width="12" height="118" viewBox="0 0 12 118" fill="none">
          <circle cx="9" cy="3" r="2" fill="#999" />
          <circle cx="6" cy="20" r="5.5" fill="#bbb" stroke="#999" />
          <circle cx="6" cy="20" r="3" stroke="#777" />
          <path d="M0 37 H12" stroke="#585858" />
          <path d="M3 50 V44 M5 49 V42 M7 49 V42 M9 50 V44 M3 50 C3 54 9 54 9 50" stroke="#b8b8b8" />
          <rect x="2" y="58" width="7" height="7" stroke="#aaa" />
          <path d="M9 65 L12 68" stroke="#aaa" />
          <path d="M6 78 V92 M0 85 H12" stroke="#8a8a8a" strokeWidth="2" />
          <rect x="1" y="104" width="10" height="6" stroke="#aaa" />
          <circle cx="9" cy="116" r="2" fill="#999" />
        </svg>
      </div>
    </div>
  )
}

function DocTabs() {
  const btn = 'w-[24px] h-[25px] bg-gradient-to-b from-[#e8e8e8] to-[#cfcfcf] border border-[#666] flex items-center justify-center shrink-0'
  return (
    <div className="h-[27px] flex shrink-0 bg-[#efefef] border-t border-[#cfcfcf] text-[15px] text-[#222]">
      <div className={btn}>
        <svg width="20" height="19" viewBox="0 0 20 19" fill="none" stroke="#555"><rect x="1" y="1" width="13" height="10" /><rect x="3.5" y="4" width="13" height="10" fill="#ddd" /><rect x="6" y="7" width="13" height="11" fill="#eee" /></svg>
      </div>
      <div className={btn}>
        <svg width="20" height="18" viewBox="0 0 20 18" fill="none" stroke="#555"><rect x="2" y="1" width="7" height="7" rx="1" /><rect x="11" y="1" width="7" height="7" rx="1" /><rect x="2" y="10" width="7" height="7" rx="1" /><rect x="11" y="10" width="7" height="7" rx="1" /></svg>
      </div>
      <div className={btn}>
        <span className="w-0 h-0 mb-[6px] border-l-[6px] border-r-[6px] border-b-[7px] border-l-transparent border-r-transparent border-b-[#444]" />
      </div>
      <div className="w-[2px] shrink-0" />
      <div className="w-[88px] h-[25px] shrink-0 bg-gradient-to-b from-[#ededed] to-[#d4d4d4] border border-t-0 border-[#8f8f8f] rounded-b-[3px] flex items-center justify-center">My Home</div>
      <div className="w-[179px] h-[25px] shrink-0 bg-white border border-t-0 border-[#8f8f8f] rounded-b-[3px] flex items-center pl-[10px] gap-[6px]">
        Legs-March-Rep...ipt
        <span className="w-[10px] h-[10px] bg-[#c9c9c9] border border-[#aaa] mb-[6px] flex items-center justify-center">
          <svg width="6" height="6" viewBox="0 0 6 6"><path d="M0 0 L6 6 M6 0 L0 6" stroke="#fff" strokeWidth="1.2" /></svg>
        </span>
      </div>
      <div className="flex-1 bg-[#c7c7c7]" />
    </div>
  )
}

function StatusBar() {
  return (
    <div className="h-[28px] flex shrink-0 items-center bg-gradient-to-b from-[#fafafa] to-[#b4b4b4] text-[14px] text-[#1e1e1e]">
      <div className="flex-1 pt-[3px]">Ready</div>
      <div className="w-[25px] h-full border-l-2 border-[#d4d4d4] flex items-center justify-center">1</div>
      <div className="w-[22px] h-full border-l-2 border-[#d4d4d4] flex items-center justify-center">1</div>
    </div>
  )
}

export default function App() {
  return (
    <div className={`w-[1800px] h-[1080px] flex flex-col overflow-hidden bg-white ${UI}`}>
      <Defs />
      <TitleBar />
      <Tabs />
      <Ribbon />
      <div className="h-[2px] bg-[#f4f4f4] shrink-0" />
      <div className="flex-1 flex min-h-0">
        <Browser />
        <div className="flex-1 flex flex-col min-w-0">
          <Viewport />
          <DocTabs />
        </div>
      </div>
      <StatusBar />
    </div>
  )
}
